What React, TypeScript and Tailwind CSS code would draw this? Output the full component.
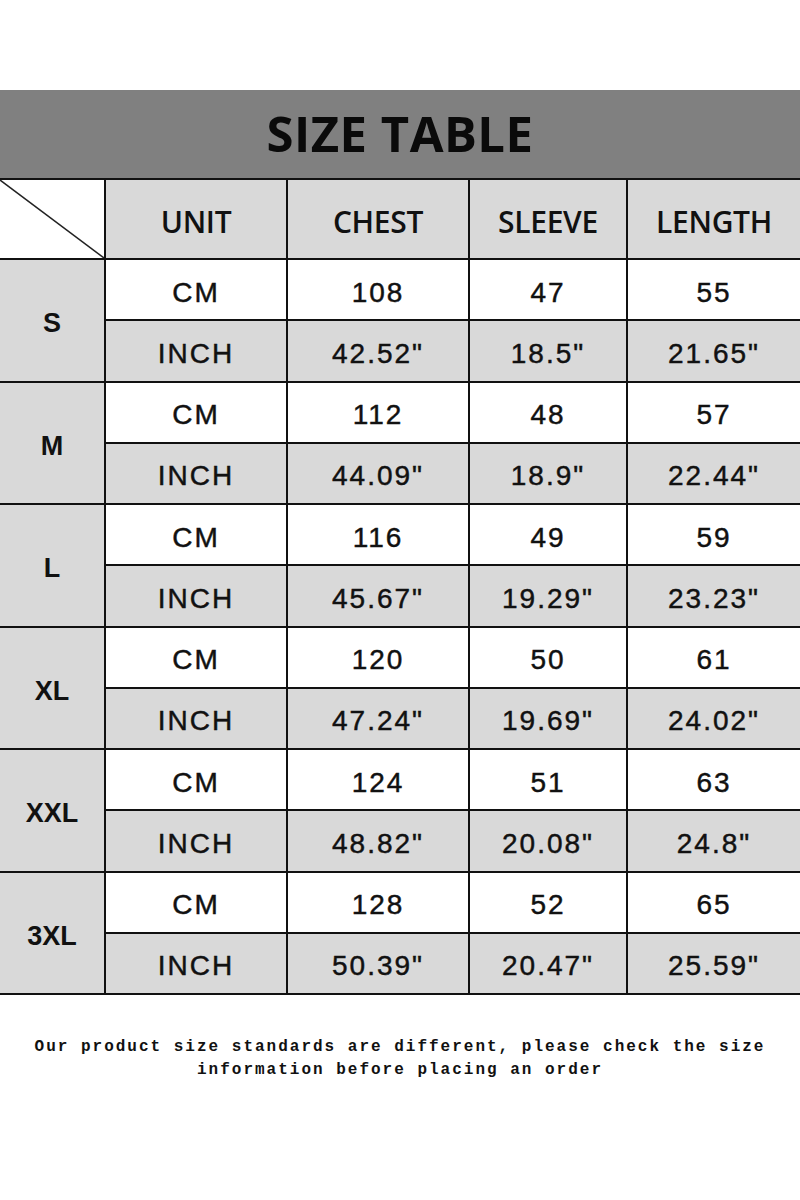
const SIZES = [
  { size: 'S', cm: ['108', '47', '55'], inch: ['42.52"', '18.5"', '21.65"'] },
  { size: 'M', cm: ['112', '48', '57'], inch: ['44.09"', '18.9"', '22.44"'] },
  { size: 'L', cm: ['116', '49', '59'], inch: ['45.67"', '19.29"', '23.23"'] },
  { size: 'XL', cm: ['120', '50', '61'], inch: ['47.24"', '19.69"', '24.02"'] },
  { size: 'XXL', cm: ['124', '51', '63'], inch: ['48.82"', '20.08"', '24.8"'] },
  { size: '3XL', cm: ['128', '52', '65'], inch: ['50.39"', '20.47"', '25.59"'] },
]

const HEADERS = ['UNIT', 'CHEST', 'SLEEVE', 'LENGTH']

const cell = 'flex items-center justify-center text-[#111]'
const num = "pt-[6px] font-['Liberation_Sans',Arial,sans-serif] text-[28px] tracking-[2px] [-webkit-text-stroke:0.45px_#111]"

export default function App() {
  return (
    <div className="w-[800px] h-[1200px] bg-white">
      <div className="h-[90px]" />

      {/* title bar */}
      <div className="h-[88px] bg-[#808080] flex items-center justify-center">
        <h1 className="font-['Open_Sans',sans-serif] font-bold text-[49px] text-[#0a0a0a] tracking-[0.5px]">
          SIZE TABLE
        </h1>
      </div>

      {/* table */}
      <div className="grid grid-cols-[104px_180px_180px_156px_172px] grid-rows-[78px_repeat(12,59.25px)] gap-[2px] bg-[#111] border-y-2 border-[#111]">
        <div className="bg-white">
          <svg width="104" height="78" viewBox="0 0 104 78">
            <line x1="0" y1="0" x2="104" y2="78" stroke="#222" strokeWidth="1.5" />
          </svg>
        </div>
        {HEADERS.map(h => (
          <div
            key={h}
            className={`${cell} pt-[4px] bg-[#d9d9d9] font-['Open_Sans',sans-serif] font-semibold text-[30px] tracking-[-0.3px]`}
          >
            {h}
          </div>
        ))}

        {SIZES.map(s => (
          <>
            <div
              key={s.size}
              className={`${cell} pt-[6px] row-span-2 bg-[#d9d9d9] font-['Liberation_Sans',Arial,sans-serif] font-bold text-[27px]`}
            >
              {s.size}
            </div>
            <div className={`${cell} bg-white ${num}`}>CM</div>
            {s.cm.map((v, i) => (
              <div key={'c' + i} className={`${cell} bg-white ${num}`}>
                {v}
              </div>
            ))}
            <div className={`${cell} bg-[#d9d9d9] ${num}`}>INCH</div>
            {s.inch.map((v, i) => (
              <div key={'i' + i} className={`${cell} bg-[#d9d9d9] ${num}`}>
                {v}
              </div>
            ))}
          </>
        ))}
      </div>

      {/* note */}
      <p className="mt-[41px] text-center font-['Liberation_Mono',monospace] font-bold text-[16px] leading-[23px] tracking-[2px] text-[#111]">
        Our product size standards are different, please check the size
        <br />
        information before placing an order
      </p>
    </div>
  )
}
